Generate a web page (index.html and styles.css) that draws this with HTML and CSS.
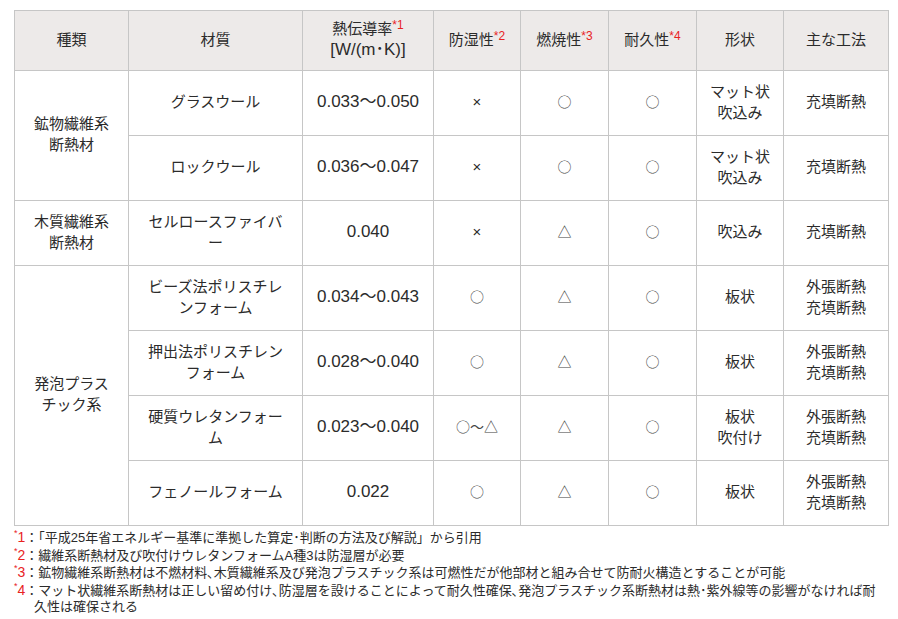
FILE: index.html
```html
<!DOCTYPE html>
<html lang="ja">
<head>
<meta charset="utf-8">
<link rel="stylesheet" href="styles.css">
</head>
<body>
<table class="spec">
<colgroup>
<col class="c1"><col class="c2"><col class="c3"><col class="c4"><col class="c5"><col class="c6"><col class="c7"><col class="c8">
</colgroup>
<thead>
<tr>
<th>種類</th>
<th>材質</th>
<th>熱伝導率<span class="note">*1</span><br><span class="unit">[W/(m･K)]</span></th>
<th>防湿性<span class="note">*2</span></th>
<th>燃焼性<span class="note">*3</span></th>
<th>耐久性<span class="note">*4</span></th>
<th>形状</th>
<th>主な工法</th>
</tr>
</thead>
<tbody>
<tr>
<td rowspan="2">鉱物繊維系<br>断熱材</td>
<td>グラスウール</td>
<td class="num">0.033〜0.050</td>
<td class="x">×</td><td class="sym">○</td><td class="sym">○</td>
<td>マット状<br>吹込み</td>
<td>充填断熱</td>
</tr>
<tr>
<td>ロックウール</td>
<td class="num">0.036〜0.047</td>
<td class="x">×</td><td class="sym">○</td><td class="sym">○</td>
<td>マット状<br>吹込み</td>
<td>充填断熱</td>
</tr>
<tr>
<td>木質繊維系<br>断熱材</td>
<td>セルロースファイバー</td>
<td class="num">0.040</td>
<td class="x">×</td><td class="sym">△</td><td class="sym">○</td>
<td>吹込み</td>
<td>充填断熱</td>
</tr>
<tr>
<td rowspan="4">発泡プラス<br>チック系</td>
<td>ビーズ法ポリスチレンフォーム</td>
<td class="num">0.034〜0.043</td>
<td class="sym">○</td><td class="sym">△</td><td class="sym">○</td>
<td>板状</td>
<td>外張断熱<br>充填断熱</td>
</tr>
<tr>
<td>押出法ポリスチレンフォーム</td>
<td class="num">0.028〜0.040</td>
<td class="sym">○</td><td class="sym">△</td><td class="sym">○</td>
<td>板状</td>
<td>外張断熱<br>充填断熱</td>
</tr>
<tr>
<td>硬質ウレタンフォーム</td>
<td class="num">0.023〜0.040</td>
<td class="sym">○〜△</td><td class="sym">△</td><td class="sym">○</td>
<td>板状<br>吹付け</td>
<td>外張断熱<br>充填断熱</td>
</tr>
<tr>
<td>フェノールフォーム</td>
<td class="num">0.022</td>
<td class="sym">○</td><td class="sym">△</td><td class="sym">○</td>
<td>板状</td>
<td>外張断熱<br>充填断熱</td>
</tr>
</tbody>
</table>
<ul class="notes">
<li><span class="mark"><span class="ast">*</span>1</span>：「平成25年省エネルギー基準に準拠した算定･判断の方法及び解説」から引用</li>
<li><span class="mark"><span class="ast">*</span>2</span>：繊維系断熱材及び吹付けウレタンフォームA種3は防湿層が必要</li>
<li><span class="mark"><span class="ast">*</span>3</span>：鉱物繊維系断熱材は不燃材料､木質繊維系及び発泡プラスチック系は可燃性だが他部材と組み合せて防耐火構造とすることが可能</li>
<li><span class="mark"><span class="ast">*</span>4</span>：マット状繊維系断熱材は正しい留め付け､防湿層を設けることによって耐久性確保､発泡プラスチック系断熱材は熱･紫外線等の影響がなければ耐久性は確保される</li>
</ul>
</body>
</html>
```
FILE: styles.css
```css
html, body {
  margin: 0;
  padding: 0;
  background: #fff;
}
body {
  padding: 10px 10px 0 14px;
  font-family: "Liberation Sans", "Noto Sans CJK JP", sans-serif;
  color: #2b2b2b;
}
.spec {
  border-collapse: collapse;
  table-layout: fixed;
  width: 875px;
  font-size: 15px;
  line-height: 21px;
}
.c1 { width: 114px; }
.c2 { width: 174px; }
.c3 { width: 131px; }
.c4 { width: 87px; }
.c5 { width: 88px; }
.c6 { width: 88px; }
.c7 { width: 87px; }
.c8 { width: 105px; }
.spec th, .spec td {
  border: 1px solid #c6c6c6;
  text-align: center;
  vertical-align: middle;
  padding: 0 14px 3px;
}
.spec th {
  background: #edeae9;
  font-weight: normal;
  height: 56px;
  padding: 0 4px 3px;
}
.unit {
  font-size: 17px;
}
.spec td {
  height: 61px;
}
.spec td:nth-last-child(2),
.spec td:last-child {
  padding-left: 4px;
  padding-right: 4px;
}
.spec td.num {
  font-size: 17px;
  white-space: nowrap;
  padding-left: 2px;
  padding-right: 2px;
}
.spec td.sym {
  font-family: "Noto Sans CJK JP", sans-serif;
  font-size: 14px;
  color: #444;
}
.spec td.x {
  font-size: 15px;
}
.note {
  color: #e8231f;
  font-size: 12px;
  position: relative;
  top: -5px;
  line-height: 1;
}
.notes {
  list-style: none;
  margin: 3px 0 0 0;
  padding: 0;
  width: 868px;
  font-size: 13px;
  line-height: 16.5px;
}
.notes li {
  padding-left: 20px;
  text-indent: -20px;
}
.mark {
  color: #e8231f;
  font-size: 14px;
}
.ast {
  font-size: 9px;
  vertical-align: top;
  line-height: 1;
}
```
